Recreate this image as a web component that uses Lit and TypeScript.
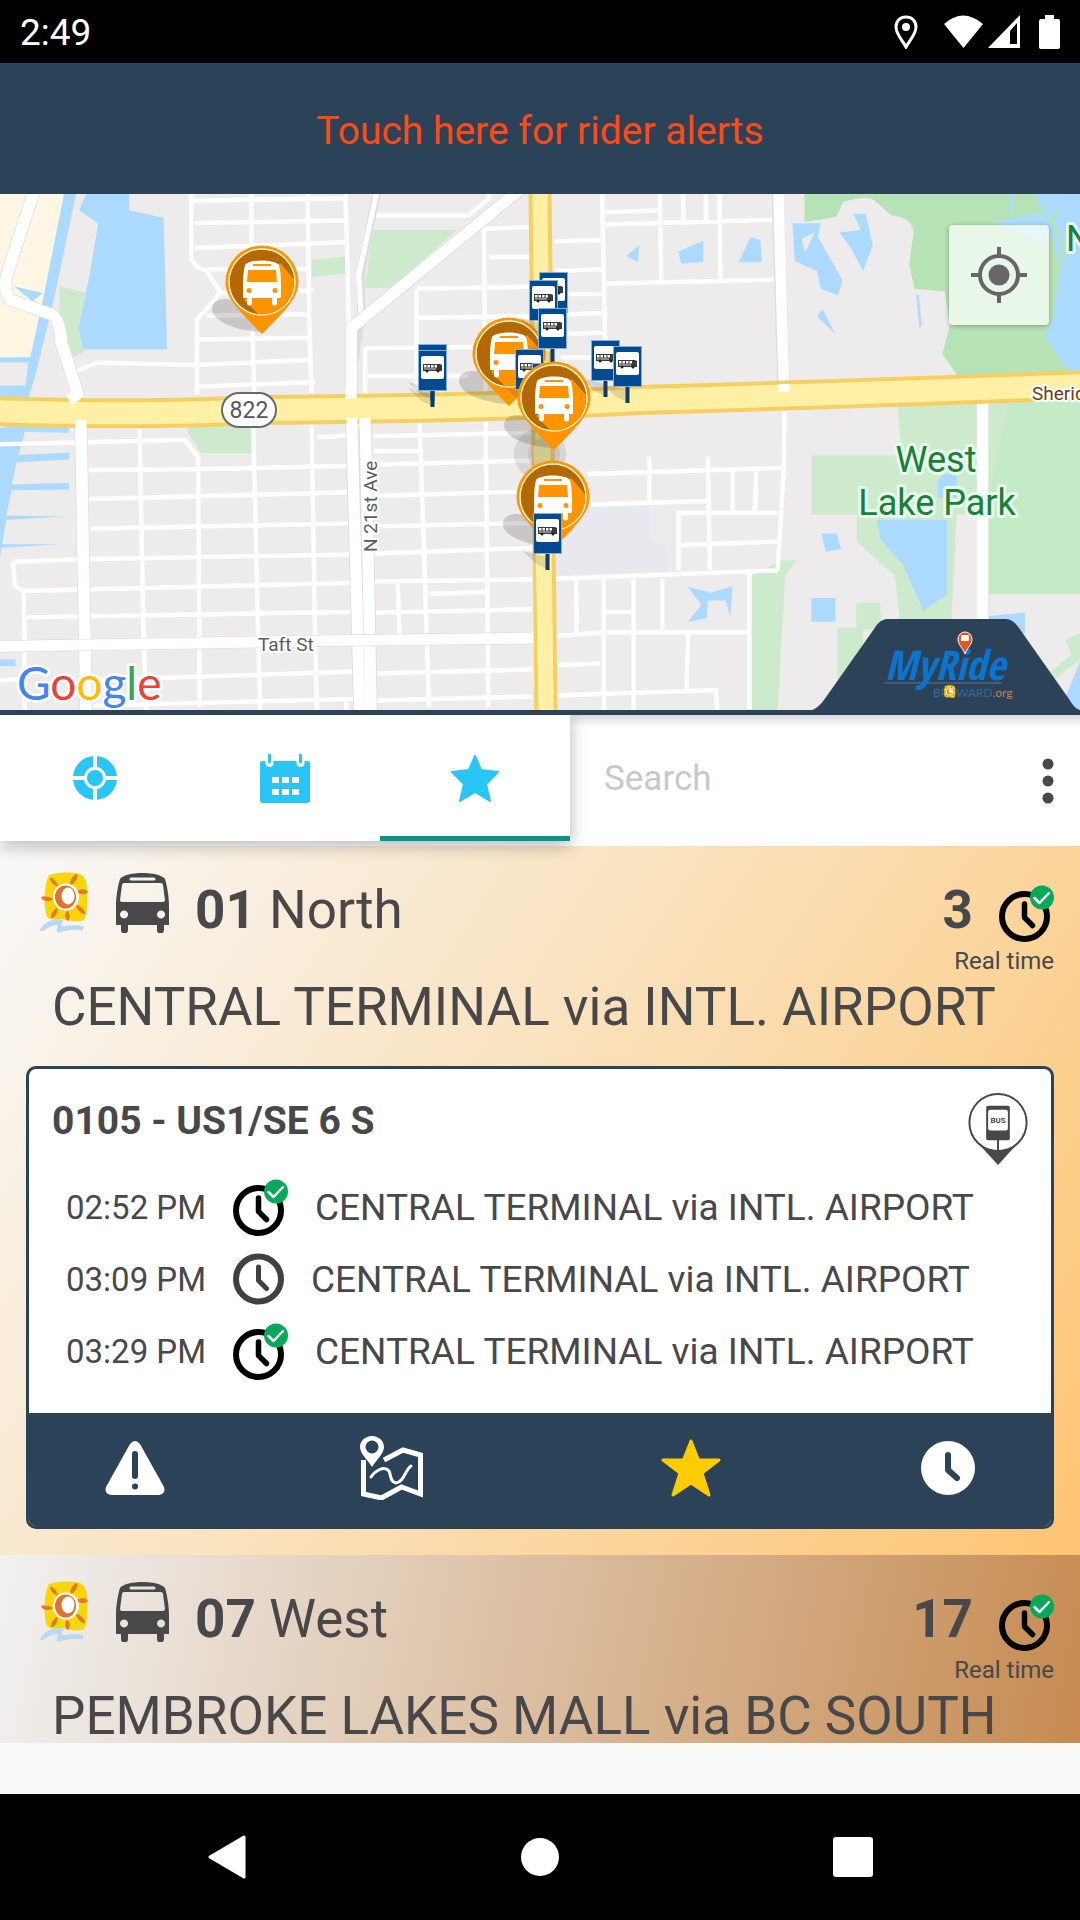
import { LitElement, html, svg, css } from "lit";
import { customElement, property } from "lit/decorators.js";

const clockIcon = (live: boolean) => live
  ? html`<svg class="clock" width="55" height="57" viewBox="0 0 55 57" role="img" aria-label="Real time">
      <circle cx="25.500" cy="31.500" r="22.500" fill="none" stroke="#000" stroke-width="6"/>
      <path d="M25.500 19v13.500l8 8" fill="none" stroke="#000" stroke-width="5.500" stroke-linecap="round" stroke-linejoin="round"/>
      <circle cx="43" cy="12.500" r="12" fill="#06a85a"/>
      <path d="M35.500 13l5 5 9.500-10" fill="none" stroke="#fff" stroke-width="2.500" stroke-linecap="round" stroke-linejoin="round"/>
    </svg>`
  : html`<svg class="clock" width="51" height="52" viewBox="0 0 51 52" role="img" aria-label="Scheduled">
      <circle cx="25.500" cy="26" r="22.500" fill="none" stroke="#404040" stroke-width="6"/>
      <path d="M25.500 14v13.500l8 8" fill="none" stroke="#404040" stroke-width="5" stroke-linecap="round" stroke-linejoin="round"/>
    </svg>`;

const sunShape = svg`
  <path d="M9 3C18 0 38-1 43 4c5 5 5 20 4 28 0 8-1 13-3 16-6 3-16 0-22-1-6 1-12 1-15-2C3 34 4 12 9 3z" fill="#f9d50c"/>
  <g fill="#e07a2c">
    <path d="M10 6c2-2 8 5 8 8-3 1-8-4-8-8zM37 2c2 2-2 10-6 11-3-2 3-12 6-11zM37 19c4-3 10-2 11 1-2 3-10 3-11-1zM1 25c4-1 10 0 12 2-2 3-11 3-12-2zM17 36c2 3-2 11-6 10-1-3 3-9 6-10zM27 39c4 2 3 9 1 10-3-1-4-8-1-10zM36 33c4 0 10 6 9 9-3 1-9-5-9-9z"/>
  </g>
  <ellipse cx="26" cy="25" rx="13" ry="13.500" fill="#fff"/>
  <ellipse cx="25.500" cy="25" rx="10.500" ry="11.500" fill="#e3702c"/>
  <ellipse cx="28" cy="24" rx="6.500" ry="8.500" fill="#fff"/>`;

const sunIcon = html`<svg width="49" height="61" viewBox="0 0 49 61" aria-hidden="true">
  ${sunShape}
  <path d="M0 58C5 48 17 46 24 48c-2 2-3 4-2 6 8 0 16-2 22 1 0 3-2 4-4 3-8-1-15 1-22 3-2-2-1-5 0-8-7 0-12 4-15 6-2 0-3 0-3-1z" fill="#b9d9f2"/>
</svg>`;

const busIcon = html`<svg width="53" height="61" viewBox="0 0 53 61" aria-hidden="true">
  <path fill="#48484a" fill-rule="evenodd" d="M4 7C10-1 43-1 49 7c2 6 4 18 4 27v19h-5v5a3.500 3.500 0 0 1-7 0v-5H12v5a3.500 3.500 0 0 1-7 0v-5H0V34C0 25 2 13 4 7zM15 5.500a1.500 1.500 0 0 0 0 3h23a1.500 1.500 0 0 0 0-3zM8 11c-1 0-2 1-2 2L4 28c0 1 1 2 2 2h41c1 0 2-1 2-2l-2-15c0-1-1-2-2-2zM8 38.500a4 4 0 1 0 .1 0zM45 38.500a4 4 0 1 0 .1 0z"/>
</svg>`;

const stopPinIcon = html`<svg width="60" height="73" viewBox="0 0 60 74" aria-hidden="true">
  <circle cx="30" cy="31" r="29" fill="#fff" stroke="#48484a" stroke-width="2"/>
  <path d="M9 51c6 6 13 8 21 8s15-2 21-8L30 74z" fill="#48484a"/>
  <rect x="18" y="14" width="24" height="35" rx="2" fill="#48484a"/>
  <rect x="20" y="18" width="20" height="21" rx="2" fill="#fff"/>
  <path d="M30 48v13" stroke="#48484a" stroke-width="2"/>
  <text x="30" y="31" text-anchor="middle" class="pin-text">BUS</text>
</svg>`;

/* A bus position; x and y are the middle of the round badge. */
const busPin = (x: number, y: number) => svg`<g transform="translate(${x} ${y})">
  <path d="M-2 50C-30 48-50 38-50 27c0-8 9-12 22-9z" fill="#333" opacity=".2"/>
  <path d="M-36.500 0a36.500 36.500 0 1 1 73 0C36.500 14 28 24 0 52-28 24-36.500 14-36.500 0z" fill="#ff9400"/>
  <circle r="33" fill="#b36800" stroke="#fff3d6" stroke-width="1.500"/>
  <path d="M18-19L32-3A32 32 0 0 1 -4 32L-18 18z" fill="#ff9400"/>
  <path fill="#fff" d="M-17-17c4-6 30-6 34 0 2 8 2 15 2 22v11h-4v5a2 2 0 0 1-5 0v-5h-20v5a2 2 0 0 1-5 0v-5h-4V5c0-7 0-14 2-22z"/>
  <path d="M-14-12l-1 12h30l-1-12zM-9-18v2H9v-2z" fill="#ff9400"/>
  <circle cx="-13" cy="8.500" r="2.500" fill="#ff9400"/><circle cx="13" cy="8.500" r="2.500" fill="#ff9400"/>
</g>`;

/* A stop sign on its post; x and y are the sign's top left corner. */
const stopSign = (x: number, y: number) => svg`<g transform="translate(${x} ${y})">
  <path d="M-10 38L14 44v12L2 50z" fill="#333" opacity=".15"/>
  <rect x="12.500" y="40" width="4" height="17" fill="#0b3d6b"/>
  <rect x=".5" y=".5" width="28" height="40" fill="#044a90" stroke="#7fb0e0"/>
  <rect x="3" y="6" width="23" height="23" rx="2" fill="#fff"/>
  <path d="M5 14h17l2 1v6H5z" fill="#3a3a3a"/>
  <path d="M6 15h2.500v2.500H6zM9.500 15h2.500v2.500h-2.500zM13 15h2.500v2.500H13zM16.500 15h2.500v2.500h-2.500z" fill="#fff"/>
  <path d="M6 19h12" stroke="#ddd"/>
  <circle cx="9" cy="21" r="1.500" fill="#222"/><circle cx="20" cy="21" r="1.500" fill="#222"/>
</g>`;

const westMap = svg`<g transform="translate(0 -4) scale(.3444 .3381)">
  <path fill="#fff7e3" d="M0 0H195L130 318 92 495 0 495z"/>
  <path fill="#acdafe" d="M230 60L255 0H375V60L475 82 485 472H240L228 408 262 240 285 98z"/>
  <path fill="#acdafe" d="M188 0h35L158 318 105 540 84 612H0V578H75L82 510H0V495H88L126 318z"/>
  <path fill="#acdafe" d="M40 285l85 20-30 25z"/>
  <path fill="#acdafe" d="M0 705l40-8 160 2v20l-128-4-18 68 148-6v20L48 805l-14 66 166-5v20L34 888l-16 75 170 3-170 10-12 72 170 0-172 10-4 30z"/>
  <path fill="#acdafe" d="M0 1388h45v20H0z"/>
  <path fill="#cdeacd" d="M172 285l76 18-20 105 14 72-40 18-30-100zM905 207l100-10v50l-100 10zM1082 118h245L1135 290h-75zM545 688h190v90H585l-40-60z"/>
  <g fill="none" stroke="#fff" stroke-width="13">
    <path d="M555 0v205l20 24 25 10 40 65-68 80v220M730 0v170M733 410l5 190M893 0l5 380 6 220M1003 0l10 400M555 32l450-8M565 98l440-8M565 172l445-18M600 235l300-2M640 305l270-8M600 372l295-5M575 442l320-5M210 540l75-30 280 8 330-16M570 582l345-14"/>
    <path d="M0 752l210-5 325-8 40 50 5 740M405 695l12 635 8 220M735 690l15 640 6 220M905 690l10 640 6 220M0 1450l60-2"/>
    <path d="M258 828l315-2 440-10M258 914l755-20M262 1002l750-16M38 1100l200-8 780-14M38 1100l5 70 25 16 950-24M68 1186l4 150v210M78 1264l940-16M270 1450l760-26M270 1525l760-20"/>
    <path d="M1085 0L1085 75h275l60-50V0M1405 110l5 500M1210 295v330M1410 115l135-6M1420 198h120M1210 292l335-6M1215 378l330-4M1060 468l320-4M1060 550h300M1060 468v140M920 732l110-8M1085 728l465-10M1085 772h130M1085 812l465-12M1085 905l460-14M1085 995l460-10M1085 1075l460-16M1085 1158l460-6M1085 1250l460-10M1218 670l28 860M1410 670l8 860M1155 1165l5 150M1245 1195l165-6M1095 1430l450-12M1095 1510l450-12"/>
    <path d="M1005 1510v30"/>
  </g>
  <path d="M100 0L20 250Q10 300 30 325L150 368Q175 385 178 450L225 600 235 700 250 1550" fill="none" stroke="#dddce0" stroke-width="38"/>
  <path d="M100 0L20 250Q10 300 30 325L150 368Q175 385 178 450L225 600 235 700 250 1550" fill="none" stroke="#fff" stroke-width="34"/>
  <path d="M1095 0L1048 240V380L1020 560" fill="none" stroke="#dddce0" stroke-width="24"/>
  <path d="M1095 0L1042 250l6 120" fill="none" stroke="#fff" stroke-width="15"/>
  <path d="M1520-10L1020 408V640L1045 1550M1060 660l18 890" fill="none" stroke="#dddce0" stroke-width="38"/>
  <path d="M1520-10L1020 408V640L1045 1550M1060 660l18 890" fill="none" stroke="#fff" stroke-width="33"/>
  <path d="M0 1350L1020 1332 1568 1325" fill="none" stroke="#dddce0" stroke-width="36"/>
  <path d="M0 1350L1020 1332 1568 1325" fill="none" stroke="#fff" stroke-width="32"/>
</g>`;

const eastMap = svg`<g transform="translate(540 -4) scale(.3444 .3381)">
  <path fill="#e7e9ee" d="M45 935L320 935 320 1040 370 1050V1130L45 1140z"/>
  <path fill="#b5e3b5" d="M768 0H1568V590L1220 560 1168 485 1190 400 1175 300 1088 292 1072 220 1085 125Q1080 80 1020 75L970 30Q950 15 880 35L860 80 768 95z"/>
  <path fill="#acdafe" d="M1490 0h78v540L1530 530 1465 430 1490 380 1510 230 1480 110z"/>
  <path fill="#acdafe" d="M1362 0h14v70h-14zM1425 0h90l-40 90zM1320 95l130-30 50 30-40 60z" opacity=".9"/>
  <path fill="none" stroke="#b5e3b5" stroke-width="9" d="M1510 60l-25 30M1480 90q60 80 30 140"/>
  <path fill="#cdebcc" d="M1038 640l265-20v1260H1130L1045 1270 1030 1140 920 1040V960H788V785h262z"/>
  <path fill="#c4ebc6" d="M1303 620h265v590l-265-15z"/>
  <path fill="#cdebcc" d="M1303 620h60l-60 280z"/>
  <path fill="#cdebcc" d="M615 1140L700 1095h45L712 1140 690 1540H615zM918 1220h70l5 80-55 0 0 40-75 200V1295h55z"/>
  <path fill="#eeebed" d="M1210 960h62v310h-77z"/>
  <path fill="#eeebed" d="M1303 1195h265v130l-100 230H1390z"/>
  <path fill="#cdebcc" d="M1525 1330l43-20v80l-80 60-6-25 60-50z"/>
  <path fill="#acdafe" d="M1303 1260l105-10v60l-105 60zM1568 1395l-60 150h60zM733 98l82 0-8 40 72 130-14 44-50-20-10-52-65-30zM910 70h36l20 95-28 75-34-66-34-48 62-8zM250 195l38-30-4 48zM402 182l72-32v62l-64 6zM612 140l28 8 4 66h-68zM820 352l38 75-53-53zM1092 308l8 2 8 90-6 10zM1155 860q25-40 55-10v60h-55zM978 975h205v220l-70 50-58-135-65-75zM817 1016h45l12 46-44 8zM788 1207h70v70h-70zM428 1173l67 18 64-19-6 90-14-48-52 0-2 52-55 12 38-52z"/>
  <path fill="#eeebed" d="M760 145l38-20-28 60z"/>
  <g fill="none" stroke="#fff" stroke-width="13">
    <path d="M180 0l12 580M190 66l158-6M190 102l490-14M348 0l4 265M415 0l2 95M482 0v90M521 0l3 265M40 152l140-4M190 277l490-12M45 240l140-6M80 308h105M80 368l105-4M80 426l105-4M60 495h115M710 655l-2 170-18 300M140 840l560-18M318 788v135M150 930l335-10M488 788l5 335M560 830v125M628 830l-4 125M690 955H402v170M410 1050l280-10M45 1150L690 1125M105 1155l2 160M185 1150v390M272 1150v390M355 1150v150M190 1248h75M608 1135v400M45 1320l140-12h420M430 1310l-5 170M45 1405l130-4M45 1495l465-16 5 60"/>
  </g>
  <path d="M1285 610v660" fill="none" stroke="#fff" stroke-width="33"/>
  <path d="M690 0l18 610" fill="none" stroke="#dddce0" stroke-width="36"/>
  <path d="M692 0l17 610" fill="none" stroke="#fff" stroke-width="31"/>
</g>`;

const mapView = html`<svg class="map-art" viewBox="0 0 1080 516" preserveAspectRatio="xMidYMid slice" role="img" aria-label="Map of buses and stops">
  <rect width="1080" height="516" fill="#eeebed"/>
  ${westMap}${eastMap}
  <path d="M540-5L546 520" stroke="#f6cf63" stroke-width="23"/>
  <path d="M540-5L546 520" stroke="#fff0a6" stroke-width="15"/>
  <path d="M-5 217Q150 222 250 216Q500 214 640 206Q850 200 1085 191" fill="none" stroke="#f6cf63" stroke-width="30"/>
  <path d="M-5 217Q150 222 250 216Q500 214 640 206Q850 200 1085 191" fill="none" stroke="#fff0a6" stroke-width="22"/>
  <path d="M546 505L541 250" stroke="#fff0a6" stroke-width="15"/>
  <path d="M71 198l5 10M351 195v10M81 226v10M352 224v10M365 224v10M784 190v8" stroke="#fff" stroke-width="11"/>
  <rect x="222" y="199" width="54" height="34" rx="17" fill="#fff" stroke="#66696e" stroke-width="2"/>
  <text x="249" y="224" text-anchor="middle" class="label shield">822</text>
  <text x="258" y="457" class="label street">Taft St</text>
  <text transform="translate(377 358) rotate(-90)" class="label street">N 21st Ave</text>
  <text x="1032" y="206" class="label street brown">Sheridan St</text>
  <text x="936" y="278" text-anchor="middle" class="label park">West</text>
  <text x="937" y="321" text-anchor="middle" class="label park">Lake Park</text>
  <text x="1066" y="57" class="label park">N</text>
  <circle cx="540" cy="260" r="26" fill="#555" opacity=".15"/>
  <circle cx="544" cy="260" r="16" fill="#555" opacity=".12"/>
  ${busPin(262, 88)}
  ${stopSign(418, 150)}${stopSign(418, 156)}
  ${stopSign(591, 146)}${stopSign(613, 152)}
  ${busPin(509, 160)}
  ${stopSign(539, 78)}${stopSign(529, 86)}${stopSign(538, 114)}
  ${stopSign(515, 155)}${stopSign(532, 169)}
  ${busPin(554, 204)}
  ${busPin(553, 303)}
  ${stopSign(533, 319)}
  <text x="17" y="506" class="label google"><tspan fill="#4285f4">G</tspan><tspan fill="#ea4335">o</tspan><tspan fill="#fbbc05">o</tspan><tspan fill="#4285f4">g</tspan><tspan fill="#34a853">l</tspan><tspan fill="#ea4335">e</tspan></text>
  <path d="M812 516q6-2 12-10l50-71q6-10 13-10h119q7 0 13 9l50 71q6 11 12 11z" fill="#2c4258"/>
  <path d="M884 489h118" stroke="#56789a" stroke-width="1"/>
  <text x="885" y="486" class="brand">MyRide</text>
  <text x="933" y="503" class="brand-sub">BR</text>
  <text x="956" y="503" class="brand-sub">WARD<tspan fill="#cf8052">.org</tspan></text>
  <g transform="translate(943 491) scale(.26)">${sunShape}</g>
  <path d="M965 460c-2-6-7-9-7-15a7 7 0 0 1 14 0c0 6-5 9-7 15z" fill="#e4541c" stroke="#fff" stroke-width="1"/>
  <rect x="961" y="441" width="8" height="6" rx="1" fill="#fff"/>
</svg>`;

interface Departure { time: string; live: boolean; dest: string; }
interface Stop { name: string; departures: Departure[]; }
interface Route { no: string; dir: string; mins: string; title: string; tone: string; stop?: Stop; }

const dest = "CENTRAL TERMINAL via INTL. AIRPORT";
const routes: Route[] = [
  {
    no: "01", dir: "North", mins: "3", title: dest, tone: "light",
    stop: {
      name: "0105 - US1/SE 6 S",
      departures: [
        { time: "02:52 PM", live: true, dest },
        { time: "03:09 PM", live: false, dest },
        { time: "03:29 PM", live: true, dest },
      ],
    },
  },
  { no: "07", dir: "West", mins: "17", title: "PEMBROKE LAKES MALL via BC SOUTH", tone: "dark" },
];

const resets = css`
  :host { display: block; font-family: Roboto, "Liberation Sans", sans-serif; color: #48484a; }
  * { box-sizing: border-box; }
  svg { display: block; flex: none; }
  button { appearance: none; border: 0; margin: 0; padding: 0; background: none; font: inherit; color: inherit; cursor: pointer; }
  h2, h3, ul, p { margin: 0; padding: 0; list-style: none; font-weight: 400; }
`;

@customElement("stop-card")
class StopCard extends LitElement {
  @property({ attribute: false }) stop!: Stop;
  static styles = [resets, css`
    .card { border: 3px solid #2c4258; border-radius: 10px; overflow: hidden; background: #fff; }
    .head { display: flex; justify-content: space-between; padding: 23px 23px 0 23px; }
    .name { font-size: 39px; line-height: 58px; font-weight: 700; }
    .pin-text { font: 700 8px Roboto, sans-serif; fill: #48484a; }
    .times { padding: 6px 24px 26px 37px; }
    .row { display: flex; align-items: center; gap: 27px; height: 72px; font-size: 37px; white-space: nowrap; }
    .time { font-size: 33px; }
    .actions { display: flex; justify-content: space-between; align-items: center; height: 113px; padding: 0 76px 4px; background: #2c4258; }
    .pair { display: flex; align-items: center; gap: 195px; }
    .pair.end { gap: 200px; }
  `];
  render() {
    return html`<article class="card">
      <div class="head"><h3 class="name">${this.stop.name}</h3>${stopPinIcon}</div>
      <ul class="times">
        ${this.stop.departures.map(d => html`<li class="row"><span class="time">${d.time}</span>${clockIcon(d.live)}<span>${d.dest}</span></li>`)}
      </ul>
      <div class="actions">
        <div class="pair">
          <button aria-label="Alerts"><svg width="60" height="54" viewBox="0 0 60 54">
            <path d="M25 3q5-6 10 0l24 43q2 7-5 8H6q-7-1-5-8z" fill="#fff"/>
            <path d="M30 13v22" stroke="#2c4258" stroke-width="6" stroke-linecap="round"/><circle cx="30" cy="45.500" r="3" fill="#2c4258"/>
          </svg></button>
          <button aria-label="Route map"><svg width="63" height="65" viewBox="0 0 63 65" fill="none" stroke="#fff">
            <path d="M12 1C5 1 0 6 0 12c0 7 8 13 12 20 4-7 12-13 12-20C24 6 19 1 12 1z" fill="#fff" stroke="none"/>
            <circle cx="12" cy="12" r="6.500" fill="#2c4258" stroke="none"/>
            <path d="M3.500 25v34l18 4 20-11 19 7V20L43 15 24 25" stroke-width="5"/>
            <path d="M11 42c4-6 13-12 18-6 2 4 1 11 7 12 8-1 9-13 15-17" stroke-width="3" stroke-linecap="round"/>
          </svg></button>
        </div>
        <div class="pair end">
          <button aria-label="Favorite"><svg width="60" height="58" viewBox="0 0 60 58">
            <path d="M30 2l7.500 19H58L41 34l7 22-18-12L12 56l7-22L2 21h20.500z" fill="#fc0" stroke="#fc0" stroke-width="3" stroke-linejoin="round"/>
          </svg></button>
          <button aria-label="Schedule"><svg width="54" height="54" viewBox="0 0 54 54">
            <circle cx="27" cy="27" r="27" fill="#fff"/><path d="M27 14v15l9 8" fill="none" stroke="#2c4258" stroke-width="6" stroke-linecap="round" stroke-linejoin="round"/>
          </svg></button>
        </div>
      </div>
    </article>`;
  }
}

@customElement("route-item")
class RouteItem extends LitElement {
  @property({ attribute: false }) route!: Route;
  static styles = [resets, css`
    .item { padding: 26px; }
    .light { background: linear-gradient(123deg, #f8f8f8, #fadfb6 50%, #fdc472); }
    .dark { background: linear-gradient(101deg, #f1f1f1, #dbbd9f 50%, #c68a50); }
    .head { display: flex; align-items: flex-start; padding-left: 14px; height: 100px; }
    .icons { display: flex; gap: 27px; margin-right: 26px; }
    .line { font-size: 53px; line-height: 76px; white-space: nowrap; }
    .wait { margin-left: auto; display: flex; flex-direction: column; align-items: flex-end; }
    .eta { display: flex; align-items: center; gap: 26px; height: 76px; }
    .eta .clock { margin-top: 6px; }
    .note { font-size: 24px; line-height: 26px; }
    .title { font-size: 53px; line-height: 70px; padding-left: 26px; white-space: nowrap; }
    .stop { margin-top: 24px; }
  `];
  render() {
    const r = this.route;
    return html`<section class="item ${r.tone}">
      <div class="head">
        <div class="icons">${sunIcon}${busIcon}</div>
        <h2 class="line"><b>${r.no}</b> ${r.dir}</h2>
        <div class="wait">
          <div class="eta"><b class="line">${r.mins}</b>${clockIcon(true)}</div>
          <p class="note">Real time</p>
        </div>
      </div>
      <p class="title">${r.title}</p>
      ${r.stop ? html`<stop-card class="stop" .stop=${r.stop}></stop-card>` : null}
    </section>`;
  }
}

@customElement("app-root")
class AppRoot extends LitElement {
  static styles = [resets, css`
    .screen { display: flex; flex-direction: column; height: 100vh; overflow: hidden; background: #fafafa; }
    .status { flex: none; display: flex; align-items: center; justify-content: space-between; height: 63px; padding: 2px 20px 0; background: #000; color: #fff; font-size: 37px; line-height: 60px; }
    .signals { display: flex; align-items: center; padding-bottom: 2px; }
    .signals .location { margin-right: 26px; }
    .signals .cell { margin: 0 19px 0 5px; }
    .alerts { flex: none; height: 131px; padding-top: 4px; background: #2c4258; color: #ff4a14; font-size: 39px; text-align: center; }
    .map { flex: none; position: relative; height: 516px; overflow: hidden; }
    .map-art { width: 100%; height: 100%; }
    .locate { position: absolute; top: 31px; right: 31px; width: 100px; height: 100px; display: grid; place-items: center; border-radius: 4px; background: rgba(255, 255, 255, .7); box-shadow: 0 1px 5px rgba(0, 0, 0, .3); }
    .label { paint-order: stroke; stroke: #fff; stroke-width: 6px; stroke-linejoin: round; font-family: Roboto, sans-serif; }
    .shield { font-size: 23px; fill: #55585d; stroke: none; }
    .street { font-size: 19px; fill: #5c5c60; stroke-width: 4px; }
    .brown { fill: #6e3b14; }
    .park { font-size: 36px; fill: #188038; stroke: #e9f8ec; }
    .google { font: 46px Lato, sans-serif; stroke-width: 5px; }
    .brand { font: italic 700 41px "Liberation Sans Narrow", "Open Sans Condensed", "Liberation Sans", sans-serif; fill: #0c74cf; }
    .brand-sub { font: 12px Lato, sans-serif; fill: #35699c; }
    .toolbar { flex: none; position: relative; z-index: 1; display: grid; grid-template-columns: 19fr 17fr; align-items: start; height: 136px; border-top: 5px solid #2c4258; background: #fff; }
    .tabs { display: grid; grid-template-columns: repeat(3, 1fr); height: 126px; background: #fff; box-shadow: 0 4px 16px rgba(0, 0, 0, .3); clip-path: inset(0 -30px -40px 0); }
    .tab { display: grid; place-items: center; padding-top: 4px; border-bottom: 5px solid transparent; }
    .tab.on { border-bottom-color: #009688; }
    .search { display: flex; align-items: center; justify-content: space-between; min-width: 0; height: 131px; padding: 2px 26px 2px 34px; background: linear-gradient(#dcdcdc, #fff 13px); }
    .field { flex: 1; min-width: 0; border: 0; outline: 0; padding: 0 0 4px; background: none; font: 35px Roboto, sans-serif; color: #48484a; }
    .field::placeholder { color: #c8c8c8; opacity: 1; }
    .list { flex: 1; min-height: 0; margin-bottom: 51px; overflow: hidden; }
    .nav { flex: none; display: grid; grid-template-columns: repeat(3, 1fr); height: 126px; padding: 0 70px; background: #000; }
    .nav button { display: grid; place-items: center; }
  `];
  render() {
    return html`<main class="screen">
      <header class="status">
        <span>2:49</span>
        <div class="signals">
          <svg class="location" width="24" height="34" viewBox="0 0 24 34"><path d="M12 2C6 2 2 6 2 12c0 7 6 13 10 20 4-7 10-13 10-20 0-6-4-10-10-10z" fill="none" stroke="#fff" stroke-width="3"/><circle cx="12" cy="12" r="4" fill="#fff"/></svg>
          <svg width="39" height="33" viewBox="0 0 39 33"><path d="M0 9Q19-8 39 9L19.500 33z" fill="#fff"/></svg>
          <svg class="cell" width="32" height="33" viewBox="0 0 32 33"><path fill="#fff" fill-rule="evenodd" d="M32 0v33H0zM29 8L22 16v13h7z"/></svg>
          <svg width="21" height="34" viewBox="0 0 21 34"><path d="M6 0h9v4h4q2 0 2 2v26q0 2-2 2H2q-2 0-2-2V6q0-2 2-2h4z" fill="#fff"/></svg>
        </div>
      </header>
      <button class="alerts">Touch here for rider alerts</button>
      <section class="map">
        ${mapView}
        <button class="locate" aria-label="My location"><svg width="56" height="56" viewBox="0 0 56 56"><circle cx="28" cy="28" r="19" fill="none" stroke="#666" stroke-width="4"/><circle cx="28" cy="28" r="10.500" fill="#666"/><path d="M28 0v9M28 47v9M0 28h9M47 28h9" stroke="#666" stroke-width="4"/></svg></button>
      </section>
      <div class="toolbar">
        <nav class="tabs">
          <button class="tab" aria-label="Nearby"><svg width="44" height="46" viewBox="0 0 44 46"><circle cx="22" cy="23" r="16.500" fill="none" stroke="#29c5f6" stroke-width="11"/><path d="M22 0v46M0 23h44" stroke="#fff" stroke-width="4"/><circle cx="22" cy="23" r="11" fill="#fff"/><circle cx="22" cy="23" r="8" fill="#29c5f6"/></svg></button>
          <button class="tab" aria-label="Schedules"><svg width="50" height="50" viewBox="0 0 50 50"><path d="M2 8h46q2 0 2 3v36q0 3-3 3H3q-3 0-3-3V11q0-3 2-3z" fill="#29c5f6"/><path d="M9.500 0v10M40.500 0v10" stroke="#fff" stroke-width="8" stroke-linecap="round"/><path d="M9.500 2v7M40.500 2v7" stroke="#29c5f6" stroke-width="3" stroke-linecap="round"/><path d="M12 24h7v6h-7zM22 24h7v6h-7zM32 24h7v6h-7zM12 36h7v6h-7zM22 36h7v6h-7zM32 36h7v6h-7z" fill="#fff"/></svg></button>
          <button class="tab on" aria-label="Favorites"><svg width="50" height="48" viewBox="0 0 50 48"><path d="M25 2l6 14 17 2-12 12 4 17-15-9-15 9 4-17L2 18l17-2z" fill="#29c5f6" stroke="#29c5f6" stroke-width="2" stroke-linejoin="round"/></svg></button>
        </nav>
        <div class="search">
          <input class="field" type="text" placeholder="Search" aria-label="Search">
          <button aria-label="More options"><svg width="12" height="48" viewBox="0 0 12 48" fill="#48484a"><circle cx="6" cy="7" r="5.500"/><circle cx="6" cy="24" r="5.500"/><circle cx="6" cy="41" r="5.500"/></svg></button>
        </div>
      </div>
      <div class="list">${routes.map(r => html`<route-item .route=${r}></route-item>`)}</div>
      <nav class="nav">
        <button aria-label="Back"><svg width="38" height="44" viewBox="0 0 38 44"><path d="M2 22L36 2v40z" fill="#fff" stroke="#fff" stroke-width="3" stroke-linejoin="round"/></svg></button>
        <button aria-label="Home"><svg width="38" height="38" viewBox="0 0 38 38"><circle cx="19" cy="19" r="19" fill="#fff"/></svg></button>
        <button aria-label="Recent apps"><svg width="40" height="40" viewBox="0 0 40 40"><rect width="40" height="40" rx="3" fill="#fff"/></svg></button>
      </nav>
    </main>`;
  }
}
